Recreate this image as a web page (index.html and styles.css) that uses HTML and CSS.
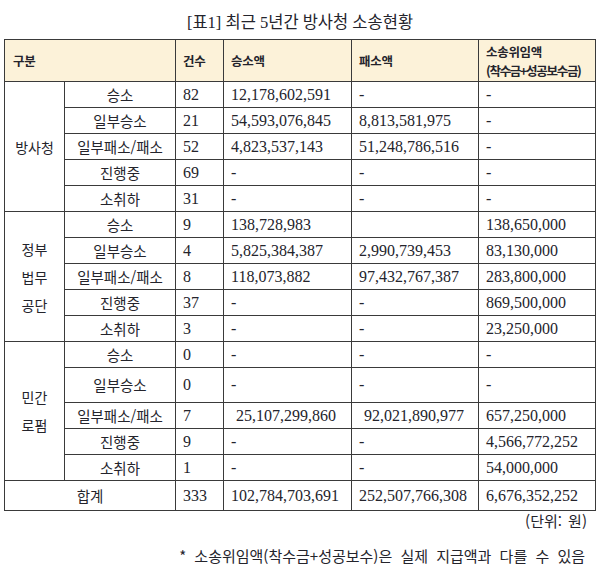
FILE: index.html
```html
<!DOCTYPE html>
<html lang="ko">
<head>
<meta charset="utf-8">
<title>최근 5년간 방사청 소송현황</title>
<link rel="stylesheet" href="styles.css">
</head>
<body>
<div class="page">
  <div class="title">[표1] 최근 5년간 방사청 소송현황</div>
  <table class="tbl">
    <colgroup>
      <col class="c1"><col class="c2"><col class="c3"><col class="c4"><col class="c5"><col class="c6">
    </colgroup>
    <thead>
      <tr class="hrow">
        <th colspan="2">구분</th>
        <th>건수</th>
        <th>승소액</th>
        <th>패소액</th>
        <th><span class="h2">소송위임액<br><span class="narrow">(착수금+성공보수금)</span></span></th>
      </tr>
    </thead>
    <tbody>
      <tr class="r">
        <td rowspan="5" class="grp">방사청</td>
        <td class="lab">승소</td><td>82</td><td>12,178,602,591</td><td>-</td><td>-</td>
      </tr>
      <tr class="r"><td class="lab">일부승소</td><td>21</td><td>54,593,076,845</td><td>8,813,581,975</td><td>-</td></tr>
      <tr class="r"><td class="lab">일부패소/패소</td><td>52</td><td>4,823,537,143</td><td>51,248,786,516</td><td>-</td></tr>
      <tr class="r"><td class="lab">진행중</td><td>69</td><td>-</td><td>-</td><td>-</td></tr>
      <tr class="r"><td class="lab">소취하</td><td>31</td><td>-</td><td>-</td><td>-</td></tr>

      <tr class="r">
        <td rowspan="5" class="grp">정부<br>법무<br>공단</td>
        <td class="lab">승소</td><td>9</td><td>138,728,983</td><td></td><td>138,650,000</td>
      </tr>
      <tr class="r"><td class="lab">일부승소</td><td>4</td><td>5,825,384,387</td><td>2,990,739,453</td><td>83,130,000</td></tr>
      <tr class="r"><td class="lab">일부패소/패소</td><td>8</td><td>118,073,882</td><td>97,432,767,387</td><td>283,800,000</td></tr>
      <tr class="r"><td class="lab">진행중</td><td>37</td><td>-</td><td>-</td><td>869,500,000</td></tr>
      <tr class="r"><td class="lab">소취하</td><td>3</td><td>-</td><td>-</td><td>23,250,000</td></tr>

      <tr class="r">
        <td rowspan="5" class="grp">민간<br>로펌</td>
        <td class="lab">승소</td><td>0</td><td>-</td><td>-</td><td>-</td>
      </tr>
      <tr class="r tall"><td class="lab">일부승소</td><td>0</td><td>-</td><td>-</td><td>-</td></tr>
      <tr class="r"><td class="lab">일부패소/패소</td><td>7</td><td class="ind">25,107,299,860</td><td class="ind">92,021,890,977</td><td>657,250,000</td></tr>
      <tr class="r"><td class="lab">진행중</td><td>9</td><td>-</td><td>-</td><td>4,566,772,252</td></tr>
      <tr class="r"><td class="lab">소취하</td><td>1</td><td>-</td><td>-</td><td>54,000,000</td></tr>

      <tr class="total">
        <td colspan="2" class="lab">합계</td><td>333</td><td>102,784,703,691</td><td>252,507,766,308</td><td>6,676,352,252</td>
      </tr>
    </tbody>
  </table>
  <div class="unit">(단위: 원)</div>
  <div class="note">* 소송위임액(착수금+성공보수)은 실제 지급액과 다를 수 있음</div>
</div>
</body>
</html>
```

FILE: styles.css
```css
html, body {
  margin: 0;
  padding: 0;
  background: #ffffff;
}

.page {
  width: 600px;
  height: 575px;
  color: #24242c;
  font-family: "Liberation Serif", "Noto Sans CJK KR", serif;
}

.title {
  height: 39px;
  box-sizing: border-box;
  padding-top: 2px;
  display: flex;
  align-items: center;
  justify-content: center;
  font-family: "Liberation Serif", "Noto Sans CJK KR", serif;
  font-size: 16.5px;
}

.tbl {
  margin-left: 4px;
  width: 591px;
  table-layout: fixed;
  border-collapse: collapse;
  border: 1.5px solid #222;
  font-size: 16px;
}

.c1 { width: 60px; }
.c2 { width: 111px; }
.c3 { width: 48px; }
.c4 { width: 128px; }
.c5 { width: 127px; }
.c6 { width: 117px; }

.tbl th,
.tbl td {
  border: 1px solid #3a3a3a;
  padding: 0 0 0 7px;
  text-align: left;
  vertical-align: middle;
  white-space: nowrap;
  overflow: hidden;
}

.hrow th {
  height: 41px;
  background: #fcf2d9;
  font-family: "Noto Sans CJK KR", sans-serif;
  font-weight: 700;
  font-size: 12.5px;
  letter-spacing: -0.3px;
}

.hrow th:first-child {
  padding-left: 8px;
}

.h2 {
  display: block;
  line-height: 19px;
  padding-top: 1px;
}

.narrow {
  letter-spacing: -1.3px;
}

.r td {
  height: 25px;
  line-height: 20px;
}

.r.tall td {
  height: 34px;
}

.total td {
  height: 29px;
}

.tbl td.lab {
  text-align: center;
  padding: 0;
  font-family: "Noto Sans CJK KR", sans-serif;
  font-size: 14.5px;
}

.tbl td.grp {
  text-align: center;
  padding: 0;
  font-family: "Noto Sans CJK KR", sans-serif;
  font-size: 14px;
  line-height: 28px;
}

.tbl td.ind {
  padding-left: 12px;
}

.unit {
  text-align: right;
  padding-right: 13px;
  height: 20px;
  line-height: 20px;
  font-family: "Noto Sans CJK KR", sans-serif;
  font-size: 15px;
  word-spacing: 2px;
}

.note {
  text-align: right;
  padding-right: 15px;
  margin-top: 14px;
  line-height: 22px;
  font-family: "Noto Sans CJK KR", sans-serif;
  font-size: 15px;
  word-spacing: 4px;
}
```
